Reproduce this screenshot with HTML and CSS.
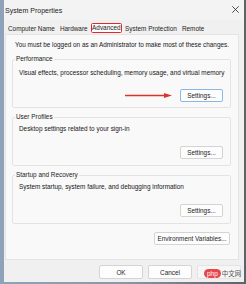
FILE: index.html
```html
<!DOCTYPE html>
<html lang="en">
<head>
    <meta charset="UTF-8">
    <title>System Properties</title>
    <link rel="stylesheet" href="styles.css">
</head>
<body>
    <div class="window">
        <div class="titlebar">
            <span class="title">System Properties</span>
            <svg class="close" width="7" height="7" viewBox="0 0 7 7">
                <path d="M0.3 0.3 L6.7 6.7 M6.7 0.3 L0.3 6.7" stroke="#3a3a3a" stroke-width="0.9" fill="none"/>
            </svg>
        </div>

        <div class="tabs">
            <span class="tab">Computer Name</span>
            <span class="tab">Hardware</span>
            <span class="tab active">Advanced</span>
            <span class="tab">System Protection</span>
            <span class="tab">Remote</span>
        </div>

        <div class="panel">
            <p class="note">You must be logged on as an Administrator to make most of these changes.</p>

            <fieldset class="group group-perf">
                <legend>Performance</legend>
                <p>Visual effects, processor scheduling, memory usage, and virtual memory</p>
                <div class="row">
                    <svg class="arrow" width="47" height="5" viewBox="0 0 47 5">
                        <path d="M0 2.5 H41" stroke="#d9352f" stroke-width="1.3"/>
                        <path d="M39 0 L47 2.5 L39 5 Z" fill="#d9352f"/>
                    </svg>
                    <button class="btn default">Settings...</button>
                </div>
            </fieldset>

            <fieldset class="group">
                <legend>User Profiles</legend>
                <p>Desktop settings related to your sign-in</p>
                <div class="row">
                    <button class="btn">Settings...</button>
                </div>
            </fieldset>

            <fieldset class="group">
                <legend>Startup and Recovery</legend>
                <p>System startup, system failure, and debugging information</p>
                <div class="row">
                    <button class="btn">Settings...</button>
                </div>
            </fieldset>

            <div class="env-row">
                <button class="btn env">Environment Variables...</button>
            </div>
        </div>

        <div class="footer">
            <button class="btn big">OK</button>
            <button class="btn big">Cancel</button>
            <button class="btn big apply">
                <span class="mark"><span class="pill">php</span>中文网</span>
            </button>
        </div>
    </div>
</body>
</html>
```

FILE: styles.css
```css
body {
    margin: 0;
    width: 246px;
    height: 284px;
    overflow: hidden;
    background: linear-gradient(90deg, #8ea3b9 0%, #8a98a6 50%, #5d6269 100%);
    font-family: "Liberation Sans", Arial, "Noto Sans CJK SC", sans-serif;
    font-size: 6.4px;
    color: #161616;
}

.window {
    margin-left: 4px;
    width: 240px;
    height: 282px;
    background: #f0f0f0;
    display: flex;
    flex-direction: column;
}

.titlebar {
    height: 20px;
    flex: none;
    display: flex;
    align-items: center;
    justify-content: space-between;
    padding: 0 5px 0 1px;
    background: #f3f3f3;
}

.title {
    font-size: 7px;
    color: #222;
}

.close {
    display: block;
    margin-top: -1px;
}

.tabs {
    display: flex;
    gap: 1px;
    height: 14px;
    flex: none;
    padding: 2px 0 0 2px;
    box-sizing: border-box;
    align-items: center;
}

.tab {
    padding: 0 2px;
    color: #1e1e1e;
    line-height: 9px;
    white-space: nowrap;
}

.tab.active {
    border: 1.5px solid #e0282d;
    border-radius: 1.5px;
    padding: 0 0.5px;
    line-height: 8px;
    background: #fbfbfb;
}

.panel {
    margin-left: 1px;
    width: 234px;
    height: 226px;
    flex: none;
    background: #f9f9f9;
    border: 1px solid #e4e4e4;
    box-sizing: border-box;
    padding: 5px 7px 0 6px;
}

.note {
    margin: 0 0 4px 3px;
    line-height: 10px;
    white-space: nowrap;
}

.group {
    margin: 4px 0 0 0;
    padding: 0 7px 6px 6px;
    border: 1px solid #e3e3e3;
    border-radius: 2px;
    min-width: 0;
}

.group-perf {
    margin-top: 0;
    padding-bottom: 5px;
}

.group legend {
    padding: 0 1px;
    margin-left: -4px;
    line-height: 10px;
    color: #222;
}

.group p {
    margin: 2px 0 0 0;
    line-height: 10px;
    white-space: nowrap;
}

.group-perf p {
    margin-top: 4px;
}

.row {
    display: flex;
    justify-content: flex-end;
    align-items: center;
    margin-top: 12px;
}

.group-perf .row {
    margin-top: 11px;
}

.arrow {
    display: block;
    margin-right: 8px;
}

.btn {
    font-family: inherit;
    font-size: 6.4px;
    color: #1e1e1e;
    background: #fdfdfd;
    border: 1px solid #d4d4d4;
    border-radius: 2px;
    height: 13px;
    width: 43px;
    padding: 0;
    line-height: 11px;
}

.btn.default {
    border-color: #86b8e8;
}

.env-row {
    display: flex;
    justify-content: flex-end;
    margin: 8px 1px 0 0;
}

.btn.env {
    width: 76px;
}

.footer {
    display: flex;
    justify-content: flex-end;
    gap: 5px;
    padding: 5px 3px 0 0;
}

.btn.big {
    width: 44px;
    height: 14px;
}

.btn.apply {
    position: relative;
    background: #f6f6f6;
    border-color: #e4e4e4;
}

.mark {
    position: absolute;
    left: 6px;
    top: 2px;
    display: flex;
    align-items: center;
    gap: 1px;
    font-size: 6.5px;
    color: #555;
    white-space: nowrap;
}

.pill {
    background: #e8474a;
    color: #fff;
    border-radius: 5px;
    padding: 0 3px;
    font-size: 6.5px;
    line-height: 9px;
}
```
